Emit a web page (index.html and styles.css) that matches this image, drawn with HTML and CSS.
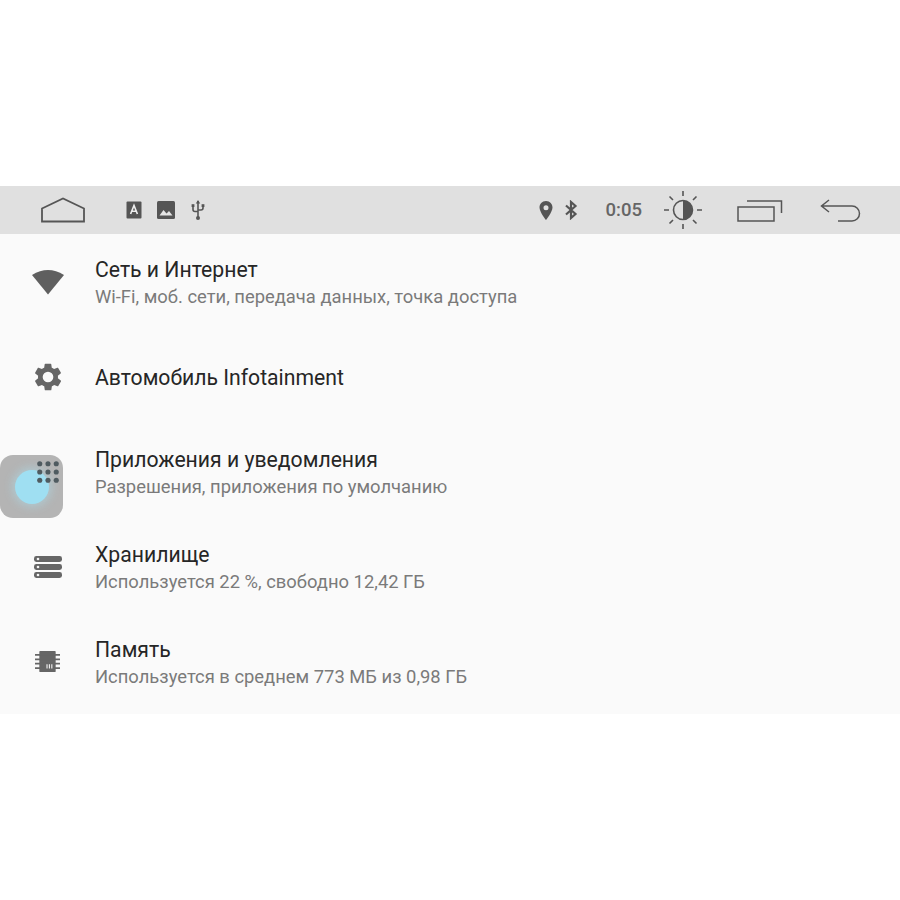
FILE: index.html
```html
<!DOCTYPE html>
<html lang="ru">
<head>
    <meta charset="UTF-8">
    <meta name="viewport" content="width=device-width, initial-scale=1.0">
    <title>Настройки</title>
    <link rel="stylesheet" href="styles.css">
</head>
<body>
    <div class="screen">
        <!-- status bar -->
        <div class="status-bar">
            <svg class="home-btn" width="46" height="26" viewBox="0 0 46 26"><path d="M2 11.5 L23 1.5 L44 11.5 V24.5 H2 Z" fill="none" stroke="#555" stroke-width="1.8"/></svg>
            <svg class="icon-a" width="16" height="18" viewBox="0 0 16 18"><rect x="0.5" y="0.5" width="15" height="17" rx="1" fill="#555"/><path d="M4.6 13 L8 4.5 L11.4 13 M5.8 10.2 H10.2" fill="none" stroke="#eee" stroke-width="1.6"/></svg>
            <svg class="icon-image" width="18" height="18" viewBox="0 0 18 18"><rect width="18" height="18" rx="1.5" fill="#555"/><path d="M2.5 14.5 L6.5 9 L9.5 12.5 L12 10 L15.5 14.5 Z" fill="#e4e4e4"/></svg>
            <svg class="icon-usb" width="14" height="20" viewBox="0 0 14 20"><path d="M7 1 V19 M2 6 V9.5 Q2 11.5 4 11.5 H7 M12 6 V8 Q12 10 10 10 L7 10" fill="none" stroke="#555" stroke-width="1.6"/><path d="M7 0 L9.2 3.4 H4.8 Z" fill="#555"/><rect x="0.6" y="4.2" width="2.8" height="2.8" fill="#555"/><rect x="10.6" y="4.2" width="2.8" height="2.8" fill="#555"/><circle cx="7" cy="18" r="2" fill="#555"/></svg>
            <div class="status-spacer"></div>
            <svg class="icon-pin" width="14" height="19" viewBox="0 0 14 19"><path fill-rule="evenodd" d="M7 0 C3 0 0.5 3 0.5 6.5 C0.5 11 7 19 7 19 C7 19 13.5 11 13.5 6.5 C13.5 3 11 0 7 0 Z M7 4.2 A2.5 2.5 0 1 1 7 9.2 A2.5 2.5 0 1 1 7 4.2 Z" fill="#555"/></svg>
            <svg class="icon-bt" width="14" height="20" viewBox="0 0 14 20"><path d="M2 5.5 L11.5 14 L7 18 V2 L11.5 6 L2 14.5" fill="none" stroke="#555" stroke-width="2.2"/></svg>
            <span class="clock">0:05</span>
            <svg class="brightness" width="40" height="40" viewBox="0 0 40 40">
                <circle cx="20" cy="20" r="9.5" fill="none" stroke="#555" stroke-width="1.6"/>
                <path d="M20 10.5 A9.5 9.5 0 0 1 20 29.5 Z" fill="#555"/>
                <path d="M20 1 V6 M20 34 V39 M1 20 H6 M34 20 H39 M6.5 6.5 L10 10 M30 30 L33.5 33.5 M33.5 6.5 L30 10 M10 30 L6.5 33.5" stroke="#555" stroke-width="1.6"/>
            </svg>
            <svg class="recents" width="46" height="23" viewBox="0 0 46 23"><rect x="1" y="8" width="36" height="14" fill="none" stroke="#555" stroke-width="1.5"/><path d="M10 2 H44.5 V14" fill="none" stroke="#555" stroke-width="1.5"/></svg>
            <svg class="back-btn" width="42" height="23" viewBox="0 0 42 23"><path d="M1 7 H32 A7.5 7.5 0 0 1 32 22 H18 M9 1 L1.5 7 L9 13" fill="none" stroke="#555" stroke-width="1.5"/></svg>
        </div>

        <!-- settings list -->
        <div class="settings-list">
            <div class="setting-row">
                <div class="setting-icon">
                    <svg width="34" height="27" viewBox="0 0 34 26"><path d="M1 6.5 Q17 -3.5 33 6.5 L17 26 Z" fill="#5f5f5f"/></svg>
                </div>
                <div class="setting-text">
                    <div class="setting-title">Сеть и Интернет</div>
                    <div class="setting-sub">Wi-Fi, моб. сети, передача данных, точка доступа</div>
                </div>
            </div>
            <div class="setting-row">
                <div class="setting-icon">
                    <svg width="32" height="32" viewBox="0 0 24 24"><path fill="#666" d="M19.4 13c.04-.32.1-.66.1-1s-.06-.68-.1-1l2.1-1.65c.2-.15.25-.42.12-.64l-2-3.46c-.12-.22-.39-.3-.61-.22l-2.49 1c-.52-.4-1.08-.73-1.69-.98l-.38-2.65A.49.49 0 0 0 14 2h-4c-.25 0-.46.18-.49.42l-.38 2.65c-.61.25-1.17.59-1.69.98l-2.49-1c-.23-.09-.49 0-.61.22l-2 3.46c-.13.22-.07.49.12.64L4.6 11c-.04.32-.1.66-.1 1s.06.68.1 1l-2.1 1.65c-.19.15-.25.42-.12.64l2 3.46c.12.22.39.3.61.22l2.49-1c.52.4 1.08.73 1.69.98l.38 2.65c.03.24.24.42.49.42h4c.25 0 .46-.18.49-.42l.38-2.65c.61-.25 1.17-.59 1.69-.98l2.49 1c.23.09.49 0 .61-.22l2-3.46c.12-.22.07-.49-.12-.64L19.4 13zM12 16a4 4 0 1 1 0-8 4 4 0 0 1 0 8z"/></svg>
                </div>
                <div class="setting-text">
                    <div class="setting-title">Автомобиль Infotainment</div>
                </div>
            </div>
            <div class="setting-row">
                <!-- floating assistive button, lies under the row icon -->
                <div class="float-btn"><div class="float-dot"></div></div>
                <div class="setting-icon setting-icon-raised">
                    <svg width="22" height="22" viewBox="0 0 24 24"><g fill="#4f5b60"><circle cx="3" cy="3" r="2.8"/><circle cx="12" cy="3" r="2.8"/><circle cx="21" cy="3" r="2.8"/><circle cx="3" cy="12" r="2.8"/><circle cx="12" cy="12" r="2.8"/><circle cx="21" cy="12" r="2.8"/><circle cx="3" cy="21" r="2.8"/><circle cx="12" cy="21" r="2.8"/><circle cx="21" cy="21" r="2.8"/></g></svg>
                </div>
                <div class="setting-text">
                    <div class="setting-title">Приложения и уведомления</div>
                    <div class="setting-sub">Разрешения, приложения по умолчанию</div>
                </div>
            </div>
            <div class="setting-row">
                <div class="setting-icon">
                    <svg width="28" height="22" viewBox="0 0 28 22"><g fill="#666"><rect y="0" width="28" height="6" rx="2.4"/><rect y="8" width="28" height="6" rx="2.4"/><rect y="16" width="28" height="6" rx="2.4"/></g><g fill="#f4f4f4"><circle cx="4" cy="3" r="1.3"/><circle cx="4" cy="11" r="1.3"/><circle cx="4" cy="19" r="1.3"/></g></svg>
                </div>
                <div class="setting-text">
                    <div class="setting-title">Хранилище</div>
                    <div class="setting-sub">Используется 22 %, свободно 12,42 ГБ</div>
                </div>
            </div>
            <div class="setting-row">
                <div class="setting-icon">
                    <svg width="25" height="23" viewBox="0 0 26 26" preserveAspectRatio="none"><rect x="4.5" y="1" width="17" height="24" rx="1" fill="#666"/><path d="M0 5.5 H26 M0 10.5 H26 M0 15.5 H26 M0 20.5 H26" stroke="#666" stroke-width="2"/><path d="M12.5 16 V21 M15 16 V21 M17.5 16 V21" stroke="#eee" stroke-width="1.2"/></svg>
                </div>
                <div class="setting-text">
                    <div class="setting-title">Память</div>
                    <div class="setting-sub">Используется в среднем 773 МБ из 0,98 ГБ</div>
                </div>
            </div>
        </div>
    </div>
</body>
</html>
```

FILE: styles.css
```css
body {
    margin: 0;
    padding: 0;
    background-color: #fff;
    font-family: Roboto, "Noto Sans", Arial, sans-serif;
}

.screen {
    margin-top: 186px;
}

/* status bar */
.status-bar {
    display: flex;
    align-items: center;
    height: 48px;
    background-color: #e0e0e0;
    color: #555;
}

.status-spacer {
    flex: 1;
}

.home-btn {
    margin-left: 40px;
}

.icon-a {
    margin-left: 40px;
}

.icon-image {
    margin-left: 15px;
}

.icon-usb {
    margin-left: 16px;
}

.icon-bt {
    margin-left: 11px;
}

.clock {
    margin-left: 28px;
    font-size: 18.5px;
    font-weight: 500;
    color: #666;
}

.brightness {
    margin-left: 21px;
}

.recents {
    margin-left: 34px;
}

.back-btn {
    margin-left: 37px;
    margin-right: 38px;
}

/* settings list */
.settings-list {
    background-color: #fafafa;
    padding: 2px 0 3px;
}

.setting-row {
    position: relative;
    display: flex;
    align-items: center;
    height: 95px;
}

.setting-icon {
    flex: 0 0 95px;
    display: flex;
    justify-content: center;
    padding-bottom: 4px;
}

.setting-icon-raised {
    position: relative;
}

.setting-text {
    display: flex;
    flex-direction: column;
    gap: 4px;
    padding-bottom: 2px;
}

.setting-title {
    font-size: 21.2px;
    line-height: 24px;
    color: #262626;
}

.setting-sub {
    font-size: 18.4px;
    line-height: 22px;
    color: #7a7a7a;
}

/* floating button */
.float-btn {
    position: absolute;
    left: 0;
    top: 29px;
    width: 63px;
    height: 63px;
    border-radius: 13px;
    background-color: #b4b4b4;
}

.float-dot {
    position: absolute;
    left: 15px;
    top: 15px;
    width: 34px;
    height: 34px;
    border-radius: 50%;
    background-color: #9fdff2;
    box-shadow: 0 0 8px 3px rgba(170, 225, 240, 0.45);
}
```
